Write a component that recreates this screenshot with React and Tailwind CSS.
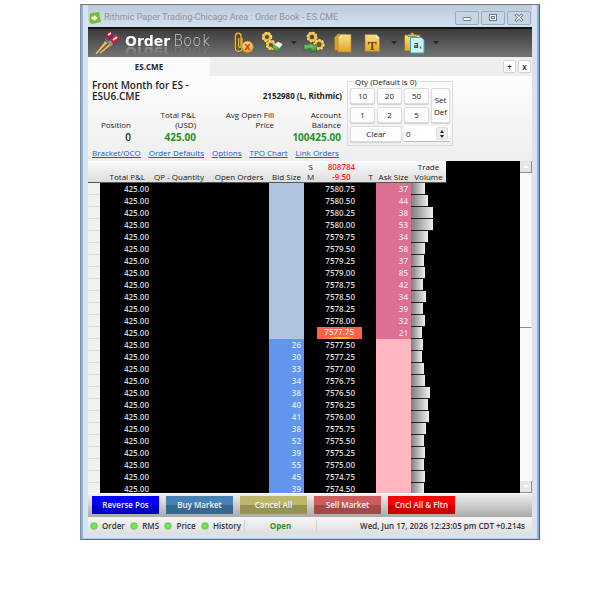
import React from 'react';

const BARS = [14, 17, 22, 22, 17, 14, 13, 14, 12, 15, 12, 14, 11, 12, 11, 13, 14, 19, 17, 18, 15, 13, 14, 13, 14, 13];
const ASKS = [37, 44, 38, 53, 34, 58, 37, 85, 42, 34, 39, 32, 21];
const BIDS = [26, 30, 33, 34, 38, 40, 41, 38, 52, 39, 55, 45, 39];

const ROWS = BARS.map((bar, i) => ({
  price: (7580.75 - i * 0.25).toFixed(2),
  ask: i < 13 ? ASKS[i] : '',
  bid: i >= 13 ? BIDS[i - 13] : '',
  last: i === 12,
  bar,
}));

function Gear({ cx, cy, r, fill = '#e8bd4a' }) {
  return (
    <g>
      <circle cx={cx} cy={cy} r={r} fill="none" stroke="#6b4a10" strokeWidth="3.6" />
      <circle cx={cx} cy={cy} r={r} fill="none" stroke={fill} strokeWidth="2.6" />
      <circle cx={cx} cy={cy} r={r + 1} fill="none" stroke="#f8dc80" strokeWidth="1.6" strokeDasharray="2 1.6" />
    </g>
  );
}

function Golds() {
  return (
    <svg width="0" height="0" className="absolute" aria-hidden="true">
      <defs>
        <linearGradient id="gold" x1="0" y1="0" x2="0" y2="1">
          <stop offset="0" stopColor="#f7e08e" />
          <stop offset="1" stopColor="#e3a526" />
        </linearGradient>
        <linearGradient id="green" x1="0" y1="0" x2="0" y2="1">
          <stop offset="0" stopColor="#8ad07c" />
          <stop offset="1" stopColor="#3a8a35" />
        </linearGradient>
      </defs>
    </svg>
  );
}

function Darts() {
  return (
    <svg viewBox="0 0 27 28" className="h-7 w-[27px] shrink-0" aria-hidden="true">
      <path d="M1 25 L10 12 L13 14 Z" fill="#c8923a" />
      <path d="M4 25 L14 14 L17 17 L9 22 Z" fill="#9a6a1c" />
      <path d="M1 25 L11 13 M5 24 L16 15" stroke="#f0cb78" strokeWidth="1.200" />
      <path d="M10 10 L14 7 L20 14 L16 17 Z" fill="#8d93ad" />
      <path d="M11 6 q1-4 5-4 l4 4 -6 6z" fill="#a81f2b" />
      <path d="M15 11 l5-6 q5 1 5 6 l-6 5z" fill="#bd2733" />
      <path d="M13 6 l3-2 M18 11 l4-3" stroke="#f4f4fa" strokeWidth="1.600" />
      <path d="M11 9 l3 3 M20 15 l4-3 M17 4 l3 3" stroke="#33539a" strokeWidth="1.600" />
    </svg>
  );
}

function ClipIcon() {
  return (
    <svg viewBox="0 0 24 24" className="size-6" aria-hidden="true">
      <path d="M10 7 V17 a3.300 3.300 0 0 1-6.600 0 V5 a2.800 2.800 0 0 1 5.600 0 V15 a1.200 1.200 0 0 1-2.400 0 V7" fill="none" stroke="#5a4413" strokeWidth="2.400" />
      <path d="M10 7 V17 a3.300 3.300 0 0 1-6.600 0 V5 a2.800 2.800 0 0 1 5.600 0 V15 a1.200 1.200 0 0 1-2.400 0 V7" fill="none" stroke="#dfb548" strokeWidth="1.400" />
      <circle cx="15.500" cy="16" r="5.800" fill="url(#gold)" stroke="#b08428" strokeWidth=".8" />
      <path d="M13.300 13 l4.400 6 M17.700 13 l-4.400 6" stroke="#d8491a" strokeWidth="1.600" />
    </svg>
  );
}

function GearTagIcon() {
  return (
    <svg viewBox="0 0 24 24" className="size-6" aria-hidden="true">
      <Gear cx={6} cy={6} r={3.4} />
      <Gear cx={10} cy={14} r={3.4} />
      <path d="M11 16 L16 11.500 L22 14 L16 21.500 Z" fill="url(#green)" stroke="#3d6a35" strokeWidth=".7" />
      <path d="M13.500 13.800 L17 10.800 L21.500 13 L18.500 17 Z" fill="#f0f5ec" />
    </svg>
  );
}

function GearSyncIcon() {
  return (
    <svg viewBox="0 0 24 24" className="size-6" aria-hidden="true">
      <Gear cx={9} cy={6} r={3.6} />
      <Gear cx={16} cy={13.500} r={3.8} />
      <path d="M1 13 L4 14 Q8 11.500 11 14.500 L13 13.500 L13.500 20.500 L6.500 20.500 L8.200 18 Q6 17 4.500 18.500 L1 19.500 Z" fill="url(#green)" stroke="#2f6b2c" strokeWidth=".8" />
    </svg>
  );
}

function PagesIcon() {
  return (
    <svg viewBox="0 0 24 24" className="size-6" aria-hidden="true">
      <path d="M6 3 H14 V19.500 H2.500 V6 Z" fill="#d7a234" stroke="#8f6a20" strokeWidth=".7" />
      <path d="M9.500 3.500 H19 V21 H6 V7 Z" fill="url(#gold)" stroke="#b5872a" strokeWidth=".7" />
      <path d="M9.500 3.500 V7 H6 Z" fill="#fbeeb8" />
    </svg>
  );
}

function TextPageIcon() {
  return (
    <svg viewBox="0 0 24 24" className="size-6" aria-hidden="true">
      <path d="M4 3.500 H15 L18.500 7 V20.500 H4 Z" fill="url(#gold)" stroke="#a87a20" strokeWidth=".7" />
      <path d="M15 3.500 L18.500 7 H15 Z" fill="#fff4cb" />
      <path d="M7 11.500 H15.500 M7.500 11 V13.500 M15 11 V13.500 M9.500 18.500 H13" stroke="#7a4b10" strokeWidth="1.200" fill="none" />
      <path d="M11.250 11.500 V19" stroke="#7a4b10" strokeWidth="2" fill="none" />
    </svg>
  );
}

function ClipboardIcon() {
  return (
    <svg viewBox="0 0 24 24" className="size-6" aria-hidden="true">
      <path d="M1.500 4 H17 V20 H1.500 Z" fill="url(#gold)" stroke="#8f6a20" strokeWidth=".8" />
      <path d="M5 5.500 V3.500 H7.500 Q9 -.5 11 3.500 H13.500 V5.500 Z" fill="#d8ba68" stroke="#82662a" strokeWidth=".6" />
      <path d="M7.500 6.500 H18.500 L21 9 V22 H7.500 Z" fill="#cdf0f4" stroke="#3fa6b5" strokeWidth="1" />
      <path d="M11.500 12.500 H14.500 V16.500 H12 Q11 15.500 12 14.800 H14.500" fill="none" stroke="#4c4a42" strokeWidth="1.200" />
      <path d="M17.500 15.500 V17.500" stroke="#4c4a42" strokeWidth="1.300" />
    </svg>
  );
}

function Caret({ label }) {
  return (
    <button type="button" aria-label={label} className="flex w-2 shrink-0 justify-center">
      <svg viewBox="0 0 8 4" className="h-1 w-2" aria-hidden="true">
        <path d="M1 0 H7 L4 3.500 Z" fill="#262626" />
      </svg>
    </button>
  );
}

function Tool({ label, children }) {
  return (
    <button type="button" aria-label={label} className="size-6 shrink-0">
      {children}
    </button>
  );
}

function WinButton({ label, children }) {
  return (
    <button type="button" aria-label={label} className="flex h-[14px] w-6 items-center justify-center rounded-[2px] border border-[#98abc0] bg-[#c5d5e6]">
      <svg viewBox="0 0 12 10" className="h-[10px] w-3" aria-hidden="true">
        {children}
      </svg>
    </button>
  );
}

function Stat({ label, children, className }) {
  return (
    <div className="flex flex-col justify-end text-right">
      <dt className="text-[8px] leading-[10px] font-medium">{label}</dt>
      <dd className={className}>{children}</dd>
    </div>
  );
}

function QtyButton({ children, className = '' }) {
  return (
    <button type="button" className={`rounded-[2px] border border-[#dcdcdc] bg-[#fdfdfd] text-[8px] font-medium shadow-[0_1px_1px_#d0d0d0] ${className}`}>
      {children}
    </button>
  );
}

function Light({ children }) {
  return (
    <span className="flex items-center gap-1">
      <span className="size-2 rounded-full border border-[#8fd080] bg-[radial-gradient(circle,#8cf06a,#3cc92c)]" />
      {children}
    </span>
  );
}

function ActionButton({ children, className }) {
  return (
    <button type="button" className={`h-[18px] w-[67px] text-[8px] font-semibold text-[#f2f2f2] ${className}`}>
      {children}
    </button>
  );
}

function TitleBar() {
  return (
    <header className="flex h-[22px] items-center bg-linear-to-b from-[#bccbdb] to-[#d3e0ee] pr-[1px] pl-[1px]">
      <svg viewBox="0 0 12 12" className="mt-1 size-3" aria-hidden="true">
        <path d="M1 2 L10 0.500 V3 L11.500 9.500 L3 11.500 L1 10 Z" fill="#77c32d" stroke="#5a9a25" strokeWidth=".6" />
        <path d="M2.500 4.500 H5 V3 L9 6 L5 9 V7.500 H2.500 Z" fill="#f3ffe5" />
      </svg>
      <h1 className="mt-1 ml-[3px] flex-1 font-['Roboto','Open_Sans',sans-serif] text-[9px] whitespace-nowrap text-[#8d959e]">
        Rithmic Paper Trading-Chicago Area : Order Book - ES.CME
      </h1>
      <div className="mt-[3px] flex gap-[2px]">
        <WinButton label="Minimize">
          <rect x="2" y="4.500" width="8" height="3" rx="1" fill="#f3f6f9" stroke="#6c7887" />
        </WinButton>
        <WinButton label="Maximize">
          <rect x="2.500" y="1.500" width="7" height="6" fill="#f3f6f9" stroke="#6c7887" />
          <rect x="4.500" y="3.500" width="3" height="2" fill="none" stroke="#6c7887" />
        </WinButton>
        <WinButton label="Close">
          <path d="M2.500 1.500 L9.500 8 M9.500 1.500 L2.500 8" stroke="#6c7887" strokeWidth="3" />
          <path d="M3 2 L9 7.500 M9 2 L3 7.500" stroke="#f3f6f9" strokeWidth="1.200" />
        </WinButton>
      </div>
    </header>
  );
}

function Toolbar() {
  return (
    <div className="flex h-[30px] items-center gap-[5px] border-t-2 border-[#111] bg-linear-to-b from-[#3c3c3c] to-[#747474] pl-[7px]">
      <Darts />
      <div className="-ml-[2px] h-[22px] w-[102px] shrink-0 font-['DejaVu_Sans',sans-serif] text-[14px] leading-[18px] whitespace-nowrap text-white">
        <div className="[-webkit-box-reflect:below_-7px_linear-gradient(transparent_30%,rgba(255,255,255,0.45))]">
          <b>Order</b>
          <span className="ml-[3px] text-[15px] font-extralight text-[#c4c4c4]">Book</span>
        </div>
      </div>
      <Tool label="Detach"><ClipIcon /></Tool>
      <Tool label="Settings"><GearTagIcon /></Tool>
      <Caret label="Settings menu" />
      <Tool label="Reload settings"><GearSyncIcon /></Tool>
      <Tool label="Copy"><PagesIcon /></Tool>
      <Tool label="Text"><TextPageIcon /></Tool>
      <Caret label="Text menu" />
      <Tool label="Clipboard"><ClipboardIcon /></Tool>
      <Caret label="Clipboard menu" />
    </div>
  );
}

function TabStrip() {
  return (
    <nav className="flex h-[19px] items-stretch bg-[#eeeeee]">
      <button type="button" className="w-[122px] bg-[#fafafa] text-[8px] font-bold">ES.CME</button>
      <div className="ml-auto flex items-center gap-[2px] pr-[1px]">
        <button type="button" aria-label="Add tab" className="flex size-[13px] items-center justify-center rounded-[2px] border border-[#d4d4d4] bg-white text-[8px] leading-none font-semibold">+</button>
        <button type="button" aria-label="Close tab" className="flex size-[13px] items-center justify-center rounded-[2px] border border-[#d4d4d4] bg-white text-[8px] leading-none font-semibold">x</button>
      </div>
    </nav>
  );
}

function Summary() {
  return (
    <section className="flex items-start bg-linear-to-b from-[#fdfdfd] to-[#eeeeee] pl-1">
      <div className="w-[250px] pt-1 pb-[3px]">
        <div className="flex items-end justify-between">
          <h2 className="w-28 text-[10px] leading-[11px] font-semibold">Front Month for ES - ESU6.CME</h2>
          <span className="text-[8px] leading-[12px] font-bold">2152980 (L, Rithmic)</span>
        </div>
        <dl className="mt-2 grid grid-cols-[39px_65px_78px_67px]">
          <Stat label="Position" className="text-[10px] leading-[14px] font-semibold">0</Stat>
          <Stat label={<>Total P&amp;L<br />(USD)</>} className="text-[10px] leading-[14px] font-bold text-[#1f931f]">425.00</Stat>
          <Stat label={<>Avg Open Fill<br />Price</>} className="h-[14px]" />
          <Stat label={<>Account<br />Balance</>} className="text-[10px] leading-[14px] font-bold text-[#1f931f]">100425.00</Stat>
        </dl>
        <div className="mt-1 flex gap-2 text-[8px] leading-[10px] font-medium whitespace-nowrap text-[#2457d6] underline">
          <a href="#bracket">Bracket/OCO</a>
          <a href="#defaults">Order Defaults</a>
          <a href="#options">Options</a>
          <a href="#tpo">TPO Chart</a>
          <a href="#link">Link Orders</a>
        </div>
      </div>
      <fieldset className="mt-[1px] ml-[5px] border border-[#dddddd] px-[2px] pt-[2px] pb-[3px]">
        <legend className="ml-1 px-[1px] text-[8px] leading-[9px] font-medium">Qty (Default is 0)</legend>
        <div className="grid grid-cols-[25px_25px_25px_19px] grid-rows-[16px_16px_16px] gap-x-[2px] gap-y-[3px]">
          <QtyButton>10</QtyButton>
          <QtyButton>20</QtyButton>
          <QtyButton>50</QtyButton>
          <QtyButton className="row-span-2 leading-[12px]">Set Def</QtyButton>
          <QtyButton>1</QtyButton>
          <QtyButton>2</QtyButton>
          <QtyButton>5</QtyButton>
          <QtyButton className="col-span-2">Clear</QtyButton>
          <div className="col-span-2 flex items-center border-b border-[#bbbbbb] bg-white">
            <input
              type="number"
              aria-label="Quantity"
              defaultValue="0"
              className="w-8 [appearance:textfield] pl-[2px] text-[8px] font-medium outline-none"
            />
            <div className="flex h-[13px] w-3 flex-col items-center justify-center gap-[2px] rounded-[2px] border border-[#dddddd] bg-[#eeeeee]">
              <button type="button" aria-label="Increase" className="border-x-2 border-b-[3px] border-x-transparent border-b-[#222]" />
              <button type="button" aria-label="Decrease" className="border-x-2 border-t-[3px] border-x-transparent border-t-[#222]" />
            </div>
          </div>
        </div>
      </fieldset>
    </section>
  );
}

function Ladder() {
  return (
    <section className="flex h-[332px]">
      <div className="flex-1 overflow-hidden bg-black">
        <table className="w-[358px] table-fixed border-separate border-spacing-0 text-[8px] leading-[10px]">
          <colgroup>
            <col className="w-3" />
            <col className="w-[49px]" />
            <col className="w-[60px]" />
            <col className="w-[60px]" />
            <col className="w-[35px]" />
            <col className="w-[72px]" />
            <col className="w-[35px]" />
            <col className="w-[35px]" />
          </colgroup>
          <thead className="text-[#222]">
            <tr className="h-[22px] bg-linear-to-b from-[#fbfbfb] to-[#dcdcdc] align-bottom whitespace-nowrap [&>th]:border-b [&>th]:border-[#555] [&>th]:p-0 [&>th]:font-medium">
              <th colSpan={2} className="text-right"><span className="pr-1">Total P&amp;L</span></th>
              <th>QP - Quantity</th>
              <th>Open Orders</th>
              <th>Bid Size</th>
              <th>
                <div className="flex items-end justify-between px-[3px]">
                  <span>S<br />M</span>
                  <span className="font-semibold text-[#ff1a1a]">808784<br />-9.50</span>
                  <span>T</span>
                </div>
              </th>
              <th>Ask Size</th>
              <th>Trade<br />Volume</th>
            </tr>
          </thead>
          <tbody className="font-semibold text-[#d8d8d8]">
            {ROWS.map((row, i) => (
              <tr key={row.price} className="h-3 [&>td]:p-0">
                <td className="border-b border-[#dcdcdc] bg-[#f1f1f1]" />
                <td className="text-right">425.00</td>
                <td />
                <td />
                <td className={i < 13 ? 'bg-[#b0c4de]' : 'bg-[#6495ed] text-right text-[#dbe6fb]'}>
                  <span className="pr-[3px]">{row.bid}</span>
                </td>
                <td>
                  <div
                    className={
                      row.last
                        ? 'ml-[13px] h-3 w-[45px] bg-[#ff6347] bg-[linear-gradient(to_right,#ff6347_20%,#ffd21a_45%,#ffd21a_60%,#ff6347_85%)] bg-[length:100%_2px] bg-bottom bg-no-repeat pr-[8px] text-right text-[#ffe0d8]'
                        : 'pr-[21px] text-right'
                    }
                  >
                    {row.price}
                  </div>
                </td>
                <td className={i < 13 ? 'bg-[#db7093] text-right text-[#f8dfe8]' : 'bg-[#ffb6c1]'}>
                  <span className="pr-[3px]">{row.ask}</span>
                </td>
                <td>
                  <div className="h-3 border-b border-[#222] bg-linear-to-r from-[#7d7d7d] to-[#f0f0f0]" style={{ width: row.bar }} />
                </td>
              </tr>
            ))}
          </tbody>
        </table>
      </div>
      <div className="flex w-3 flex-col bg-[#f9f9f9]">
        <button type="button" aria-label="Scroll up" className="flex h-3 items-center justify-center border-r border-b border-[#8c8c8c] bg-[#e6e6e6]">
          <span className="border-x-[3px] border-b-[3px] border-x-transparent border-b-white" />
        </button>
        <div className="h-[155px] border-r border-b border-r-[#e8e8e8] border-b-[#8c8c8c]" />
        <div className="flex-1" />
        <button type="button" aria-label="Scroll down" className="flex h-3 items-center justify-center border-r border-b border-[#8c8c8c] bg-[#e6e6e6]">
          <span className="border-x-[3px] border-t-[3px] border-x-transparent border-t-white" />
        </button>
      </div>
    </section>
  );
}

function Actions() {
  return (
    <section className="flex h-6 items-center gap-[7px] border-t border-white bg-linear-to-b from-[#f0f0f0] to-[#a9a9a9] pb-[1px] pl-1">
      <ActionButton className="bg-linear-to-b from-[#0000ff] from-50% to-[#0000c4] to-50%">Reverse Pos</ActionButton>
      <ActionButton className="bg-linear-to-b from-[#4682b4] from-50% to-[#37688f] to-50%">Buy Market</ActionButton>
      <ActionButton className="bg-linear-to-b from-[#bdb76b] from-50% to-[#979252] to-50%">Cancel All</ActionButton>
      <ActionButton className="bg-linear-to-b from-[#cd5c5c] from-50% to-[#a44848] to-50%">Sell Market</ActionButton>
      <ActionButton className="bg-linear-to-b from-[#ff0000] from-50% to-[#cc0000] to-50%">Cncl All &amp; Fltn</ActionButton>
    </section>
  );
}

function StatusBar() {
  return (
    <footer className="flex h-[17px] items-center bg-linear-to-b from-[#f6f6f6] to-[#dedede] pl-[2px] text-[8px] font-semibold whitespace-nowrap text-[#333]">
      <div className="flex w-[155px] items-center justify-between border-r border-[#d0d0d0] pr-[3px]">
        <Light>Order</Light>
        <Light>RMS</Light>
        <Light>Price</Light>
        <Light>History</Light>
      </div>
      <span className="w-[72px] border-r border-[#d0d0d0] text-center font-bold text-[#1f931f]">Open</span>
      <time className="ml-auto pr-[7px]">Wed, Jun 17, 2026 12:23:05 pm CDT +0.214s</time>
    </footer>
  );
}

export default function App() {
  return (
    <main className="bg-white pt-1 pr-[60px] pb-[60px] pl-20 font-['Open_Sans','Noto_Sans',sans-serif] text-[#222]">
      <Golds />
      <div className="border border-t-[#777] border-r-[#3f5f92] border-b-[#5b6f8c] border-l-[#8292a8] bg-[#d6e4f1]">
        <div className="border-x-2 border-b border-[#8fb0da] border-b-[#b7cbe2] px-[5px] pb-1">
          <TitleBar />
          <Toolbar />
          <TabStrip />
          <Summary />
          <Ladder />
          <Actions />
          <StatusBar />
        </div>
      </div>
    </main>
  );
}
